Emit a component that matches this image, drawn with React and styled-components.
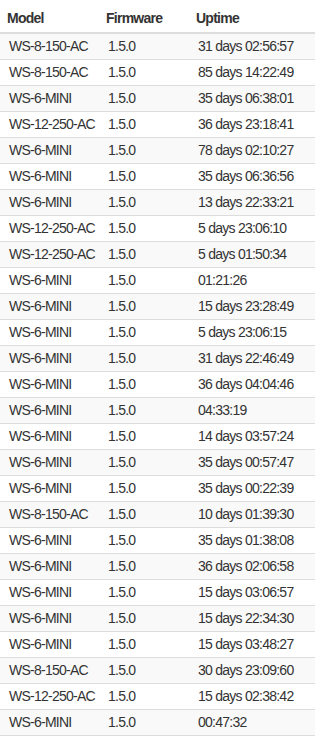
import React from 'react';
import styled, { createGlobalStyle } from 'styled-components';

const GlobalStyle = createGlobalStyle`
    body {
        margin: 0;
        background: #fff;
        font-family: "Liberation Sans", Arial, sans-serif;
        font-size: 14px;
        color: #333;
    }
`

const Table = styled.table`
    width: 315px;
    border-collapse: separate;
    border-spacing: 0;
    table-layout: fixed;
    letter-spacing: -0.75px;
`

const HeadCell = styled.th`
    width: ${props => props.width}px;
    text-align: left;
    font-weight: bold;
    line-height: 20px;
    padding: 8px 7px 4px;
    border-bottom: 2px solid #ddd;
    vertical-align: bottom;
    box-sizing: border-box;
`

const Row = styled.tr`
    background: ${props => props.striped ? '#f9f9f9' : '#fff'};
`

const Cell = styled.td`
    line-height: 20px;
    padding: 2px 0 3px 9px;
    border-bottom: 1px solid #ddd;
    white-space: nowrap;
`

const rows = [
    ['WS-8-150-AC', '31 days 02:56:57'],
    ['WS-8-150-AC', '85 days 14:22:49'],
    ['WS-6-MINI', '35 days 06:38:01'],
    ['WS-12-250-AC', '36 days 23:18:41'],
    ['WS-6-MINI', '78 days 02:10:27'],
    ['WS-6-MINI', '35 days 06:36:56'],
    ['WS-6-MINI', '13 days 22:33:21'],
    ['WS-12-250-AC', '5 days 23:06:10'],
    ['WS-12-250-AC', '5 days 01:50:34'],
    ['WS-6-MINI', '01:21:26'],
    ['WS-6-MINI', '15 days 23:28:49'],
    ['WS-6-MINI', '5 days 23:06:15'],
    ['WS-6-MINI', '31 days 22:46:49'],
    ['WS-6-MINI', '36 days 04:04:46'],
    ['WS-6-MINI', '04:33:19'],
    ['WS-6-MINI', '14 days 03:57:24'],
    ['WS-6-MINI', '35 days 00:57:47'],
    ['WS-6-MINI', '35 days 00:22:39'],
    ['WS-8-150-AC', '10 days 01:39:30'],
    ['WS-6-MINI', '35 days 01:38:08'],
    ['WS-6-MINI', '36 days 02:06:58'],
    ['WS-6-MINI', '15 days 03:06:57'],
    ['WS-6-MINI', '15 days 22:34:30'],
    ['WS-6-MINI', '15 days 03:48:27'],
    ['WS-8-150-AC', '30 days 23:09:60'],
    ['WS-12-250-AC', '15 days 02:38:42'],
    ['WS-6-MINI', '00:47:32'],
]

const App = () => {
    return (
        <>
            <GlobalStyle />
            <Table>
                <thead>
                    <tr>
                        <HeadCell width={99}>Model</HeadCell>
                        <HeadCell width={90}>Firmware</HeadCell>
                        <HeadCell width={126}>Uptime</HeadCell>
                    </tr>
                </thead>
                <tbody>
                    {rows.map(([model, uptime], i) => (
                        <Row key={i} striped={i % 2 === 0}>
                            <Cell>{model}</Cell>
                            <Cell>1.5.0</Cell>
                            <Cell>{uptime}</Cell>
                        </Row>
                    ))}
                </tbody>
            </Table>
        </>
    )
}

export default App;
